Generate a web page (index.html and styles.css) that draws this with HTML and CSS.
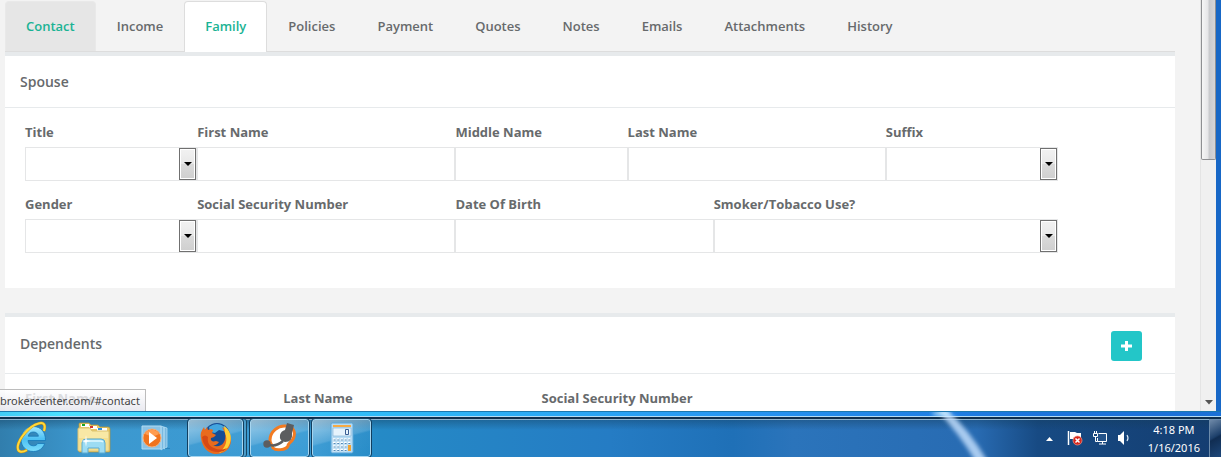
FILE: index.html
```html
<!DOCTYPE html>
<html lang="en">
<head>
<meta charset="utf-8">
<title>Family</title>
<link rel="stylesheet" href="styles.css">
</head>
<body>
<div class="window">
  <main class="page">
    <nav class="tabs">
      <a class="tab tab-hover" href="#contact">Contact</a>
      <a class="tab" href="#income">Income</a>
      <a class="tab tab-active" href="#family">Family</a>
      <a class="tab" href="#policies">Policies</a>
      <a class="tab" href="#payment">Payment</a>
      <a class="tab" href="#quotes">Quotes</a>
      <a class="tab" href="#notes">Notes</a>
      <a class="tab" href="#emails">Emails</a>
      <a class="tab" href="#attachments">Attachments</a>
      <a class="tab" href="#history">History</a>
    </nav>
    <section class="panel spouse">
      <header class="panel-head"><h5 class="panel-title">Spouse</h5></header>
      <form class="fields">
        <div class="field span-2"><label for="title">Title</label><div class="pick"><select class="control" id="title"><option></option></select></div></div>
        <div class="field span-3"><label for="first">First Name</label><input class="control" id="first" type="text"></div>
        <div class="field span-2"><label for="middle">Middle Name</label><input class="control" id="middle" type="text"></div>
        <div class="field span-3"><label for="last">Last Name</label><input class="control" id="last" type="text"></div>
        <div class="field span-2"><label for="suffix">Suffix</label><div class="pick"><select class="control" id="suffix"><option></option></select></div></div>
        <div class="field span-2"><label for="gender">Gender</label><div class="pick"><select class="control" id="gender"><option></option></select></div></div>
        <div class="field span-3"><label for="ssn">Social Security Number</label><input class="control" id="ssn" type="text"></div>
        <div class="field span-3"><label for="dob">Date Of Birth</label><input class="control" id="dob" type="text"></div>
        <div class="field span-4"><label for="smoker">Smoker/Tobacco Use?</label><div class="pick"><select class="control" id="smoker"><option></option></select></div></div>
      </form>
    </section>
    <section class="panel">
      <header class="panel-head panel-head-tall">
        <h5 class="panel-title">Dependents</h5>
        <button class="add" type="button" aria-label="Add dependent"><svg width="11" height="10" viewBox="0 0 11 10"><path d="M4 0h3v3.500h4v3H7V10H4V6.500H0v-3h4z" fill="#fff"/></svg></button>
      </header>
      <form class="fields">
        <div class="field span-3"><label for="dep-first">First Name</label><input class="control" id="dep-first" type="text"></div>
        <div class="field span-3"><label for="dep-last">Last Name</label><input class="control" id="dep-last" type="text"></div>
        <div class="field span-3"><label for="dep-ssn">Social Security Number</label><input class="control" id="dep-ssn" type="text"></div>
      </form>
    </section>
  </main>
  <div class="scroll">
    <div class="thumb"></div>
    <svg class="scroll-down" width="8" height="5" viewBox="0 0 8 5"><path d="M0 0h8L4 4.500z" fill="#555"/></svg>
  </div>
  <div class="status">brokercenter.com/#contact</div>
</div>
<footer class="taskbar">
  <svg class="streak" width="80" height="46" viewBox="0 0 80 46">
    <defs><filter id="soft"><feGaussianBlur stdDeviation="2"/></filter></defs>
    <path d="M6-5h10q25 22 44 55H48Q32 22 6-5z" fill="#c9e3ff" opacity=".8" filter="url(#soft)"/>
    <path d="M3 0h17l3 4H7z" fill="#dcfbff" opacity=".7" filter="url(#soft)"/>
  </svg>
  <div class="pins">
    <button class="pin" type="button" aria-label="Internet Explorer">
      <svg width="32" height="34" viewBox="0 0 32 34">
        <defs><linearGradient id="ie" x2="0" y2="1"><stop stop-color="#a5e9ff"/><stop offset=".5" stop-color="#4cc0f3"/><stop offset="1" stop-color="#7bdcfb"/></linearGradient></defs>
        <path d="M29.500 19.500H12c.3 3.400 2.300 5.300 5.300 5.300 2.100 0 3.600-.9 4.400-2.300h7c-1.700 5-6 8-11.400 8C10 30.500 5 25.500 5 18.200 5 11 10 5.500 17.300 5.500c7.500 0 12.400 5.500 12.200 14zM12.200 15.200h10.200c-.4-2.700-2.300-4.200-5-4.200s-4.600 1.500-5.200 4.200z" fill="url(#ie)" stroke="#1677b8" stroke-width=".8"/>
        <path d="M28 10C30 4 28 .8 22.500 2.500 13 5 3 17.500 1.800 25c-.8 6.500 4 7 9.200 4" fill="none" stroke="#c58a10" stroke-width="2.800"/>
        <path d="M28 10C30 4 28 .8 22.500 2.500 13 5 3 17.500 1.800 25c-.8 6.500 4 7 9.200 4" fill="none" stroke="#ffd83a" stroke-width="2"/>
      </svg>
    </button>
    <button class="pin" type="button" aria-label="Windows Explorer">
      <svg width="34" height="34" viewBox="0 0 34 34">
        <path d="M2 7V3q0-1 1-1h9l2 2h7l2 2h8q2 0 2 2v22q0 1-1 1H2z" fill="#e8c964" stroke="#b39438" stroke-width=".7"/>
        <path d="M4 3h8v3H4z" fill="#fff"/><path d="M5 3h3v2H5z" fill="#18a52b"/>
        <path d="M12 5h8v3h-8z" fill="#fff"/><path d="M13 5h3v2h-3z" fill="#d0382d"/>
        <path d="M20 7h10v3H20z" fill="#fff"/><path d="M21 7h4v2h-4z" fill="#2b8ee2"/>
        <path d="M1 8q0-1 1-1h11l2 3h16q1 0 1 1v18q0 1-1 1H2q-1 0-1-1z" fill="#f8e8a5" stroke="#dcc171"/>
        <path d="M2 17h29v12H2z" fill="#f0d982" opacity=".6"/>
        <path d="M5 22q0-4 4-4h15q4 0 4 4v10h-6v-5H11v5H5z" fill="#9cdcf3" stroke="#5aabd2"/>
        <path d="M7 21q1-1 3-1h13q2 0 3 1" fill="none" stroke="#dff7ff" stroke-width="1.500"/>
        <path d="M9 14l.8 5.200L14 20l-4.200.8L9 26l-.8-5.200L4 20l4.200-.8z" fill="#fff"/>
      </svg>
    </button>
    <button class="pin" type="button" aria-label="Windows Media Player">
      <svg width="30" height="30" viewBox="0 0 30 30">
        <path d="M23 4l3 1v19l-3 2zM20 3l3 1v21l-3 2z" fill="#79b9e0" stroke="#b8e1f6" stroke-width=".7"/>
        <path d="M1 3h19v23H1z" fill="#8bc3e6" stroke="#b2dcf2"/>
        <path d="M24 25h5v1h-5z" fill="#1f76ad" opacity=".6"/>
        <circle cx="11" cy="15" r="9" fill="#f0731d" stroke="#f6b078"/><path d="M4 11a8 8 0 0 1 14 0q-6 4-14 0z" fill="#ff9c50"/>
        <path d="M8 9v12l8-6z" fill="#fff"/>
      </svg>
    </button>
  </div>
  <div class="running">
    <button class="app app-stack" type="button" aria-label="Firefox">
      <svg width="32" height="32" viewBox="0 0 32 32">
        <circle cx="17" cy="14" r="13" fill="#164d95"/><path d="M9 5q8-6 16 0l2 5-8-2-4 3-5-1z" fill="#42a6df"/>
        <path d="M1 16C0 11 2 8 4 5l1 3 2-3 1 3c2-1 4-1 5 0l-1 3 4 2-2 2-3 1c-1 3 2 4 5 3l3 1c-2 3-5 4-7 3 8 4 15-2 13-12l-3-6c5 2 9 7 9 13 0 9-7 14-15 14C8 32 2 25 1 16z" fill="#e96b1e"/>
        <path d="M24 4c6 4 8 10 6 17-2 6-6 9-11 10 7-6 9-13 6-20z" fill="#ffcf35"/>
        <path d="M2 15c1 9 7 15 16 15 4 0 7-1 9-4-5 2-9 2-13 0C9 24 7 20 8 15c-2-2-4-2-6 0z" fill="#d64a16"/>
      </svg>
    </button>
    <button class="app" type="button" aria-label="Softphone">
      <svg width="34" height="32" viewBox="0 0 34 32">
        <path d="M10 26c0-3-3-3-3-8C7 10 15 3 23 4c8 0 10 7 7 13-2 4-5 4-5 7-2 4-12 5-15 2z" fill="#fff" stroke="#f27b22" stroke-width="3"/>
        <path d="M24 1l7 2-2 8q1 9-7 9-6-1-5-7 1-4 5-5z" fill="#5c5d5f"/>
        <path d="M4 22q8 4 16-3" fill="none" stroke="#5c5d5f" stroke-width="2.500"/><circle cx="4" cy="22" r="3.700" fill="#5c5d5f"/>
      </svg>
    </button>
    <button class="app" type="button" aria-label="Calculator">
      <svg width="24" height="32" viewBox="0 0 24 32">
        <rect x="1" y="1" width="22" height="30" rx="1.500" fill="#b6dbf3" stroke="#5aa6d8"/>
        <path d="M3 3h18v2H3z" fill="#f6aa45"/><path d="M3 6h18v8H3z" fill="#e6f3fc" stroke="#8ab8d8" stroke-width=".7"/>
        <path d="M15.500 7.500h3v5h-3z" fill="none" stroke="#3b5f94"/>
        <path d="M3 17.500h18M3 21h18M3 24.500h14M3 28h14" stroke="#fff" stroke-width="2.500" stroke-dasharray="2.500 1.200"/>
        <path d="M3.500 18h18M3.500 21.500h18M3.500 25h14M3.500 28.500h14" stroke="#568bb8" stroke-width="1.200" stroke-dasharray="2 1.700"/>
        <path d="M18 23h3v6h-3z" fill="#f3a431"/>
      </svg>
    </button>
  </div>
  <div class="tray">
    <svg width="9" height="5" viewBox="0 0 9 5"><path d="M1 5l3.500-4L8 5z" fill="#fff"/></svg>
    <svg width="16" height="16" viewBox="0 0 16 16"><path d="M1.500 1v14" stroke="#fff" stroke-width="1.500"/><path d="M3 2h5l2 1h4v7H9L7 9H3z" fill="#fff"/><circle cx="10.500" cy="10.500" r="4.500" fill="#d7261c" stroke="#f49c8d" stroke-width=".7"/><path d="M8.500 8.500l4 4m0-4l-4 4" stroke="#fff" stroke-width="1.500"/></svg>
    <svg width="16" height="16" viewBox="0 0 16 16"><path d="M6.500 3.500h8v8h-9V8" fill="#24538a" stroke="#fff"/><path d="M7 14h7M10.500 12v2" stroke="#fff"/><path d="M1.500 3.500h4v3h-4zM2.500 1v2M4.500 1v2M3.500 7v4.500h2" fill="none" stroke="#fff"/></svg>
    <svg width="14" height="14" viewBox="0 0 14 14"><path d="M1 4h2l4-4v14l-4-4H1z" fill="#fff"/><path d="M10 4q2 3 0 6" fill="none" stroke="#dce9f7" stroke-width="1.200"/></svg>
    <time class="clock" datetime="2016-01-16T16:18"><span>4:18 PM</span><span>1/16/2016</span></time>
  </div>
  <button class="desktop" type="button" aria-label="Show desktop"></button>
</footer>
</body>
</html>
```
FILE: styles.css
```css
*, *::before { box-sizing: border-box; }
html, body { height: 100%; }
body {
  margin: 0;
  display: flex;
  flex-direction: column;
  overflow: hidden;
  font-family: "Open Sans", "Noto Sans", sans-serif;
  font-size: 13px;
  line-height: 18px;
  color: #676a6c;
  background: #12365e;
}
.window {
  position: relative;
  flex: 1;
  min-height: 0;
  display: flex;
  background: #f3f3f4;
  border-right: 5px solid #1767c6;
}
.page {
  flex: 1;
  min-width: 0;
  overflow: hidden;
  padding: 1px 25px 0 5px;
  background: #f3f3f3;
}
.tabs { display: flex; border-bottom: 1px solid #ddd; }
.tab {
  padding: 15px 20px 16px;
  border: 1px solid transparent;
  border-bottom: 0;
  border-radius: 4px 4px 0 0;
  font-weight: 600;
  color: #676a6c;
  text-decoration: none;
}
.tab-hover { background: #e6e6e6; border-color: #e9e9e9; color: #1ab394; }
.tab-active {
  margin-bottom: -1px;
  padding-bottom: 17px;
  background: #fff;
  border-color: #ddd;
  color: #1ab394;
}
.panel { background: #fff; border-top: 4px solid #e7eaec; }
.spouse { padding-bottom: 20px; margin-bottom: 25px; }
.panel-head {
  display: flex;
  justify-content: space-between;
  align-items: flex-start;
  padding: 17px 33px 16px 15px;
  border-bottom: 1px solid #e7eaec;
}
.panel-head-tall { padding-top: 14px; padding-bottom: 12px; }
.panel-head-tall .panel-title { padding-top: 4px; }
.panel-title { margin: 0; font-size: 14px; font-weight: 600; }
.add {
  display: flex;
  align-items: center;
  justify-content: center;
  width: 31px;
  height: 30px;
  padding: 0;
  border: 0;
  border-radius: 3px;
  background: #23c6c8;
}
.fields {
  display: grid;
  grid-template-columns: repeat(12, 1fr);
  row-gap: 14px;
  padding: 15px 117px 15px 20px;
}
.field { display: flex; flex-direction: column; gap: 6px; min-width: 0; }
.field label { font-weight: 700; white-space: nowrap; }
.span-2 { grid-column: span 2; }
.span-3 { grid-column: span 3; }
.span-4 { grid-column: span 4; }
.control {
  display: block;
  width: 100%;
  height: 34px;
  padding: 6px 12px;
  border: 1px solid #e5e6e7;
  border-radius: 0;
  appearance: none;
  background: #fff;
  font: inherit;
  color: inherit;
}
.pick { position: relative; }
.pick::before {
  content: "";
  position: absolute;
  top: 1px;
  right: 1px;
  bottom: 1px;
  width: 17px;
  border: 1px solid #707070;
  box-shadow: inset 0 0 0 1px #fff;
  background: linear-gradient(#f2f2f2, #e8e8e8 50%, #dadada 50%, #cfcfcf);
  pointer-events: none;
}
.pick::after {
  content: "";
  position: absolute;
  top: 15px;
  right: 5px;
  border: 4px solid transparent;
  border-top-color: #000;
  border-bottom: 0;
  pointer-events: none;
}
.scroll {
  display: flex;
  flex-direction: column;
  justify-content: space-between;
  align-items: center;
  width: 16px;
  padding-bottom: 6px;
  background: #f0f0f0;
  border-left: 1px solid #e4e4e4;
}
.thumb {
  align-self: stretch;
  height: 39.5%;
  border: 1px solid #8e8f92;
  border-top: 0;
  border-radius: 0 0 2px 2px;
  background: linear-gradient(90deg, #f6f6f6, #e6e6e8 45%, #c9cacd 55%, #d5d5d8);
}
.status {
  position: absolute;
  left: 0;
  bottom: 0;
  padding: 2px 5px 1px 0;
  border: 1px solid #bcbcbc;
  border-left: 0;
  border-bottom: 0;
  background: linear-gradient(rgba(255, 255, 255, .8), rgba(228, 228, 236, .8));
  font-family: "Noto Sans", "Open Sans", sans-serif;
  font-size: 11px;
  color: #444;
}
.taskbar {
  position: relative;
  display: flex;
  height: 46px;
  padding-top: 7px;
  border-top: 1px solid #1c78ae;
  background:
    linear-gradient(transparent 4px, #b5dcf5 4px 5px, #0e2e4c 5px 7px, #8fb2cc 7px 8px, rgba(20, 60, 90, .4) 8px, transparent 18px),
    linear-gradient(90deg, #43ccf5, #4be0ff 5%, #2fb9f7 32%, #2796f2 60%, #1b74dc 85%, #1b70d6) 0 0 / 100% 4px no-repeat,
    linear-gradient(90deg, #317ead, #3c98cf 7%, #3b9cd5 25%, #258ac6 31%, #257cc4 50%, #1f70b7 60%, #2b74bb 65%, #286bb2 80%, #174a83 85%, #143d70);
}
.streak { position: absolute; left: 76%; top: 0; }
.pins { display: flex; align-items: center; gap: 28px; padding-left: 15px; }
.pin { display: flex; justify-content: center; width: 34px; padding: 0; border: 0; background: none; }
.running { display: flex; gap: 3px; margin-left: 15px; }
.app {
  display: flex;
  align-items: center;
  justify-content: center;
  width: 59px;
  padding: 0;
  border: 1px solid #a6d5ef;
  border-radius: 3px;
  outline: 1px solid #123f60;
  background: linear-gradient(165deg, rgba(255, 255, 255, .5), rgba(255, 255, 255, .16) 48%, rgba(255, 255, 255, .03) 52%, transparent);
}
.app-stack { width: 55px; margin-right: 4px; box-shadow: 3px 0 0 #4a9cca, 4px 0 0 #174765; }
.tray {
  display: flex;
  align-items: center;
  gap: 9px;
  margin-left: auto;
  padding-right: 9px;
}
.tray svg:first-child { margin-right: 4px; }
.clock {
  display: flex;
  flex-direction: column;
  align-items: center;
  margin-left: 8px;
  padding-top: 2px;
  font-family: "Noto Sans", "Open Sans", sans-serif;
  font-size: 11px;
  color: #fff;
}
.desktop {
  width: 12px;
  padding: 0;
  border: 1px solid #6d8cab;
  border-right: 0;
  border-bottom: 0;
  background: linear-gradient(150deg, #6e89a8, #1d406b 45%, #102d52 50%, #1d477a);
}
```
